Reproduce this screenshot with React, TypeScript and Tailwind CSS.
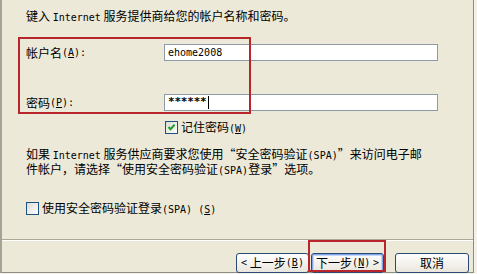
import React from "react";

const L = ({ children }: { children: React.ReactNode }) => (
  <span className="font-['DejaVu_Sans_Mono',monospace] text-[10px]">{children}</span>
);

const Key = ({ k }: { k: string }) => (
  <L>
    (<u>{k}</u>)
  </L>
);

const QL = () => <span className="inline-block w-[12px] text-right">“</span>;
const QR = () => <span className="inline-block w-[12px] text-left">”</span>;

const CheckBox = ({ checked }: { checked?: boolean }) => (
  <span className="relative inline-block w-[13px] h-[13px] shrink-0 border border-[#1c5180] bg-gradient-to-br from-[#dcdcd5] to-white">
    {checked && (
      <svg viewBox="0 0 11 11" className="absolute left-0 top-0 w-[11px] h-[11px]">
        <path d="M2.5 5 L4.5 7.2 L8.6 2.8" fill="none" stroke="#21a121" strokeWidth="2" />
      </svg>
    )}
  </span>
);

const Button = ({
  children,
  isDefault,
  w,
}: {
  children: React.ReactNode;
  isDefault?: boolean;
  w: string;
}) => (
  <div
    className={
      "h-[20px] rounded-[3px] border border-[#2a4a74] bg-gradient-to-b from-white to-[#e8e6dc] flex items-center justify-center text-[12px] leading-none text-black " +
      w +
      (isDefault ? " shadow-[inset_0_0_0_1px_#7fa4e8,inset_0_0_0_2px_#c6d7f7]" : "")
    }
  >
    {children}
  </div>
);

export default function App() {
  return (
    <div className="relative w-[477px] h-[274px] bg-[#f3f1e8] font-['Noto_Sans_CJK_SC',sans-serif] text-black overflow-hidden">
      <div className="w-[474px] h-[273px] bg-[#ece9d8] border-l-2 border-l-[#a4a398] border-r border-r-[#8e8d85] border-b border-b-[#8e8d85] flex flex-col">
        <div className="pl-[24px] pt-[10px] text-[12px] leading-[12px] whitespace-nowrap">
          键入 <L>Internet</L> 服务提供商给您的帐户名称和密码。
        </div>

        <div className="mt-[20px] pl-[24px] grid grid-cols-[138px_274px] gap-y-[33px] text-[12px]">
          <div className="flex items-center h-[17px] leading-none">
            帐户名<Key k="A" />
            <L>:</L>
          </div>
          <div className="h-[17px] border border-[#8d9aa8] bg-white flex items-center pl-[3px]">
            <L>ehome2008</L>
          </div>
          <div className="flex items-center h-[17px] leading-none">
            密码<Key k="P" />
            <L>:</L>
          </div>
          <div className="h-[17px] border border-[#8d9aa8] bg-white flex items-center pl-[3px]">
            <span className="font-['DejaVu_Sans_Mono',monospace] text-[11px] font-bold tracking-[-0.2px]">******</span>
            <span className="w-px h-[13px] bg-black ml-[1px]" />
          </div>
        </div>

        <div className="mt-[10px] pl-[163px] flex items-center gap-[3px] text-[12px] leading-none">
          <CheckBox checked />
          <span>
            记住密码<Key k="W" />
          </span>
        </div>

        <div className="mt-[13px] pl-[24px] text-[12px] leading-[13px] whitespace-nowrap">
          <div>
            如果 <L>Internet</L> 服务供应商要求您使用<QL />安全密码验证<L>(SPA)</L>
            <QR />来访问电子邮
          </div>
          <div>
            件帐户，请选择<QL />使用安全密码验证<L>(SPA)</L>登录<QR />选项。
          </div>
        </div>

        <div className="mt-[25px] pl-[24px] flex items-center gap-[3px] text-[12px] leading-none">
          <CheckBox />
          <span>
            使用安全密码验证登录<L>(SPA) </L>
            <Key k="S" />
          </span>
        </div>

        <div className="mt-[24px] h-[2px] border-t border-t-[#aca899] border-b border-b-white" />

        <div className="mt-[12px] flex pl-[234px]">
          <Button w="w-[73px]">
            <L>&lt;</L>&nbsp;上一步<Key k="B" />
          </Button>
          <div className="w-[2px]" />
          <Button w="w-[73px]" isDefault>
            下一步<Key k="N" />&nbsp;<L>&gt;</L>
          </Button>
          <div className="w-[11px]" />
          <Button w="w-[74px]">取消</Button>
        </div>
      </div>

      {/* red annotation boxes */}
      <div className="absolute left-[18px] top-[37px] w-[233px] h-[77px] border-2 border-[#b8262c] pointer-events-none" />
      <div className="absolute left-[308px] top-[240px] w-[78px] h-[32px] border-2 border-[#b8262c] pointer-events-none" />
    </div>
  );
}
